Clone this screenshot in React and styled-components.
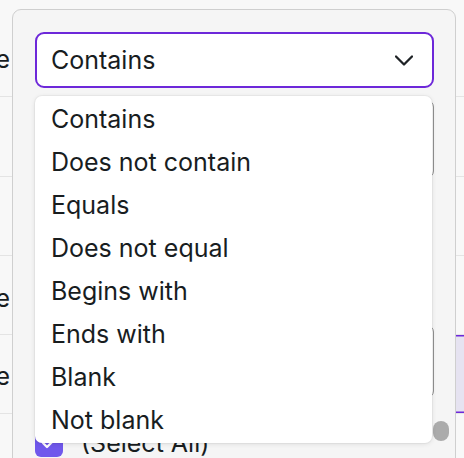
import React from 'react';
import styled, { createGlobalStyle } from 'styled-components';

const Global = createGlobalStyle`
  html, body { margin: 0; padding: 0; }
  body {
    width: 464px;
    height: 458px;
    overflow: hidden;
    background: #f8f8f8;
    font-family: Inter, "Noto Sans", sans-serif;
    color: #181d1f;
  }
  * { box-sizing: border-box; }
`;

const Stage = styled.div`
  position: relative;
  width: 464px;
  height: 458px;
  overflow: hidden;
`;

/* ---------- underlying grid ---------- */
const GridRows = styled.div`
  display: flex;
  flex-direction: column;
`;

const Row = styled.div`
  display: flex;
  height: ${(p) => p.$h}px;
  border-bottom: 1px solid #e4e4e4;
  padding-top: ${(p) => p.$offset || 0}px;
`;

const EdgeCell = styled.div`
  width: 12px;
  display: flex;
  justify-content: flex-end;
  align-items: center;
  overflow: hidden;
  white-space: nowrap;
  padding-right: 2px;
  font-size: 25px;
  color: #181d1f;
`;

const MidCell = styled.div`
  flex: 1;
`;

const RightCell = styled.div`
  width: 9px;
  margin-top: ${(p) => -(p.$offset || 0)}px;
  background: ${(p) => (p.$selected ? '#e6e3f1' : 'transparent')};
  box-shadow: ${(p) =>
    p.$selected ? 'inset 0 1.5px 0 #6d28d9, inset 0 -1.5px 0 #6d28d9' : 'none'};
`;

/* ---------- filter panel (popup) ---------- */
const Panel = styled.div`
  position: absolute;
  left: 12px;
  top: 9px;
  width: 444px;
  height: 480px;
  background: #f5f5f5;
  border: 1px solid #cfcfcf;
  border-radius: 9px;
  padding: 22px 21px 0 22px;
  display: flex;
  flex-direction: column;
`;

const SelectWrap = styled.div`
  position: relative;
  z-index: 2;
`;

const SelectBox = styled.div`
  height: 56px;
  background: #fff;
  border: 2px solid #6d28d9;
  border-radius: 9px;
  display: flex;
  align-items: center;
  justify-content: space-between;
  padding: 0 19px 0 14px;
  font-size: 25px;
  color: #181d1f;
`;

const Chevron = () => (
  <svg width="18" height="11" viewBox="0 0 18 11" fill="none">
    <polyline
      points="1,1.5 9,9.5 17,1.5"
      stroke="#1f2326"
      strokeWidth="2.3"
      strokeLinecap="round"
      strokeLinejoin="round"
    />
  </svg>
);

const OptionList = styled.ul`
  position: absolute;
  top: calc(100% + 8px);
  left: 0;
  width: 397px;
  height: 347px;
  margin: 0;
  padding: 2px 0 0;
  list-style: none;
  background: #fff;
  border-radius: 7px;
  box-shadow: 0 0 0 1px rgba(0, 0, 0, 0.03), 0 1px 5px rgba(0, 0, 0, 0.1);
`;

const Option = styled.li`
  height: 43px;
  line-height: 43px;
  padding-left: 16px;
  font-size: 25px;
  color: #181d1f;
  white-space: nowrap;
`;

const InputBox = styled.div`
  height: ${(p) => p.$h}px;
  margin-top: ${(p) => p.$mt || 0}px;
  background: #fff;
  border: 1px solid #8f8f8f;
  border-radius: 7px;
`;

const JoinSpace = styled.div`
  height: 147px;
`;

const SetRow = styled.div`
  display: flex;
  align-items: center;
  gap: 18px;
  height: 28px;
  margin-top: 31px;
`;

const CheckBox = styled.div`
  width: 28px;
  height: 28px;
  flex: none;
  border-radius: 6px;
  background: #7058ec;
  display: flex;
  align-items: center;
  justify-content: center;
`;

const SetLabel = styled.span`
  font-size: 25px;
  line-height: 28px;
  color: #181d1f;
  white-space: nowrap;
`;

const ScrollThumb = styled.div`
  position: absolute;
  left: 420px;
  top: 411px;
  width: 16px;
  height: 20px;
  border-radius: 8px;
  background: #ababab;
`;

const options = [
  'Contains',
  'Does not contain',
  'Equals',
  'Does not equal',
  'Begins with',
  'Ends with',
  'Blank',
  'Not blank',
];

const rows = [
  { h: 97, label: 'Type', offset: 22 },
  { h: 80, label: '' },
  { h: 79, label: '' },
  { h: 79, label: 'Date', offset: 5 },
  { h: 79, label: 'Value', offset: 3, selected: true },
  { h: 79, label: '' },
];

export default function App() {
  return (
    <>
      <Global />
      <Stage>
        <GridRows>
          {rows.map((r, i) => (
            <Row key={i} $h={r.h} $offset={r.offset}>
              <EdgeCell>{r.label}</EdgeCell>
              <MidCell />
              <RightCell $selected={r.selected} $offset={r.offset} />
            </Row>
          ))}
        </GridRows>

        <Panel>
          <SelectWrap>
            <SelectBox>
              <span>Contains</span>
              <Chevron />
            </SelectBox>
            <OptionList>
              {options.map((o) => (
                <Option key={o}>{o}</Option>
              ))}
            </OptionList>
          </SelectWrap>
          <InputBox $h={78} $mt={12} />
          <JoinSpace />
          <InputBox $h={73} />
          <SetRow>
            <CheckBox>
              <svg width="16" height="12" viewBox="0 0 16 12" fill="none">
                <polyline
                  points="2,6 6,10 14,2"
                  stroke="#fff"
                  strokeWidth="2.4"
                  strokeLinecap="round"
                  strokeLinejoin="round"
                />
              </svg>
            </CheckBox>
            <SetLabel>(Select All)</SetLabel>
          </SetRow>
          <ScrollThumb />
        </Panel>
      </Stage>
    </>
  );
}
